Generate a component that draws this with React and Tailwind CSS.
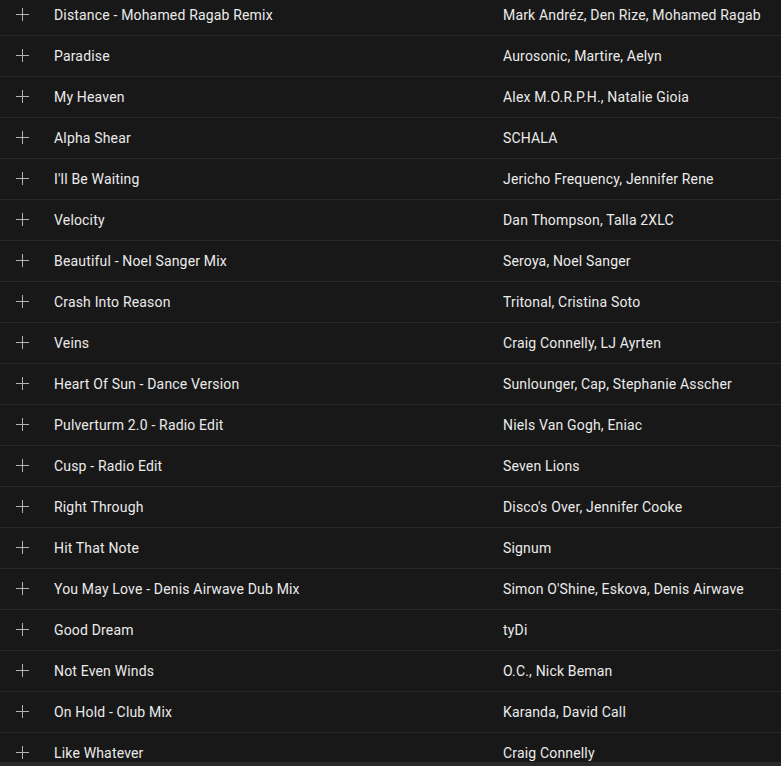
import React from "react";

const tracks = [
  ["Distance - Mohamed Ragab Remix", "Mark Andréz, Den Rize, Mohamed Ragab"],
  ["Paradise", "Aurosonic, Martire, Aelyn"],
  ["My Heaven", "Alex M.O.R.P.H., Natalie Gioia"],
  ["Alpha Shear", "SCHALA"],
  ["I'll Be Waiting", "Jericho Frequency, Jennifer Rene"],
  ["Velocity", "Dan Thompson, Talla 2XLC"],
  ["Beautiful - Noel Sanger Mix", "Seroya, Noel Sanger"],
  ["Crash Into Reason", "Tritonal, Cristina Soto"],
  ["Veins", "Craig Connelly, LJ Ayrten"],
  ["Heart Of Sun - Dance Version", "Sunlounger, Cap, Stephanie Asscher"],
  ["Pulverturm 2.0 - Radio Edit", "Niels Van Gogh, Eniac"],
  ["Cusp - Radio Edit", "Seven Lions"],
  ["Right Through", "Disco's Over, Jennifer Cooke"],
  ["Hit That Note", "Signum"],
  ["You May Love - Denis Airwave Dub Mix", "Simon O'Shine, Eskova, Denis Airwave"],
  ["Good Dream", "tyDi"],
  ["Not Even Winds", "O.C., Nick Beman"],
  ["On Hold - Club Mix", "Karanda, David Call"],
  ["Like Whatever", "Craig Connelly"],
];

function PlusIcon() {
  return (
    <svg width="14" height="14" viewBox="0 0 14 14" className="text-[#b3b3b3] -translate-y-[1px]">
      <path d="M7.5 1v13M1 7.5h13" stroke="currentColor" strokeWidth="1" fill="none" />
    </svg>
  );
}

export default function App() {
  return (
    <div
      className="w-[781px] h-[766px] bg-[#181818] flex flex-col"
      style={{ fontFamily: "Roboto, 'Liberation Sans', sans-serif" }}
    >
      <div className="h-[762px] overflow-hidden">
        <div className="-mt-[5px]">
          {tracks.map(([title, artists], i) => (
            <div
              key={i}
              className="h-[41px] flex items-center border-b border-[#282828] text-[14px] tracking-[0.17px] text-[#ebebeb]"
            >
              <div className="w-[54px] pl-[15px] flex items-center">
                <PlusIcon />
              </div>
              <div className="w-[449px] truncate">{title}</div>
              <div className="flex-1 truncate">{artists}</div>
            </div>
          ))}
        </div>
      </div>
      <div className="flex-1 bg-[#282828]" />
    </div>
  );
}
